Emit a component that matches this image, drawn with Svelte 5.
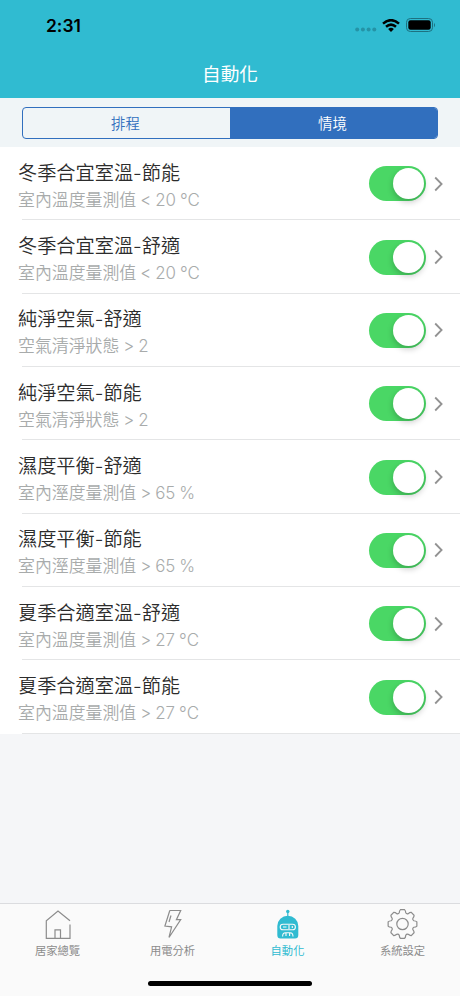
<script lang="ts">
	type Rule = { name: string; condition: string; enabled: boolean }

	let segment: string = '情境'
	let activeTab: string = 'auto'

	const segments = ['排程', '情境']

	let rules: Rule[] = [
		{ name: '冬季合宜室溫-節能', condition: '室內溫度量測值 < 20 °C', enabled: true },
		{ name: '冬季合宜室溫-舒適', condition: '室內溫度量測值 < 20 °C', enabled: true },
		{ name: '純淨空氣-舒適', condition: '空氣清淨狀態 > 2', enabled: true },
		{ name: '純淨空氣-節能', condition: '空氣清淨狀態 > 2', enabled: true },
		{ name: '濕度平衡-舒適', condition: '室內溼度量測值 > 65 %', enabled: true },
		{ name: '濕度平衡-節能', condition: '室內溼度量測值 > 65 %', enabled: true },
		{ name: '夏季合適室溫-舒適', condition: '室內溫度量測值 > 27 °C', enabled: true },
		{ name: '夏季合適室溫-節能', condition: '室內溫度量測值 > 27 °C', enabled: true }
	]

	const tabs = [
		{ id: 'home', label: '居家總覽' },
		{ id: 'power', label: '用電分析' },
		{ id: 'auto', label: '自動化' },
		{ id: 'settings', label: '系統設定' }
	]

	// eight rounded teeth, [radius, angle offset] for each tooth
	const tooth = [
		[11.8, -16],
		[13.8, -13],
		[13.8, 13],
		[11.8, 16]
	]

	function point(radius: number, degrees: number) {
		const a = (degrees * Math.PI) / 180
		return `${(15.5 + radius * Math.sin(a)).toFixed(2)} ${(16 - radius * Math.cos(a)).toFixed(2)}`
	}

	const gear =
		Array.from({ length: 8 }, (_, i) => {
			const p = tooth.map(([r, a]) => point(r, i * 45 + a))
			const corner = [point(14.5, i * 45 - 8), point(14.5, i * 45 + 8)]
			const valley = point(10.6, i * 45 + 22.5)
			const next = point(tooth[0][0], (i + 1) * 45 + tooth[0][1])
			return `${i ? '' : 'M' + p[0]}Q${p[1]} ${corner[0]}L${corner[1]}Q${p[2]} ${p[3]}Q${valley} ${next}`
		}).join('') + 'Z'
</script>

<div class="screen">
	<header>
		<div class="status">
			<span class="time">2:31</span>
			<div class="indicators">
				<svg class="signal" viewBox="0 0 22 5">
					<circle cx="2.2" cy="2.5" r="2" />
					<circle cx="7.9" cy="2.5" r="2" />
					<circle cx="13.6" cy="2.5" r="2" />
					<circle cx="19.3" cy="2.5" r="2" />
				</svg>
				<svg class="wifi" viewBox="0 0 18 13">
					<path d="M1 4.6Q9 -2.3 17 4.6" />
					<path d="M4 7.8Q9 3.5 14 7.8" />
					<path class="dot" d="M6.1 10Q9 7.6 11.9 10L9 13Z" />
				</svg>
				<svg class="battery" viewBox="0 0 30 14">
					<rect class="shell" x=".5" y=".5" width="26" height="13" rx="3.8" />
					<rect x="2.3" y="2.3" width="22.4" height="9.4" rx="2.2" />
					<path class="cap" d="M28 4.7Q30 7 28 9.3Z" />
				</svg>
			</div>
		</div>
		<h1>自動化</h1>
	</header>

	<div class="filter">
		<div class="segments">
			{#each segments as s}
				<button class:active={segment === s} on:click={() => (segment = s)}>{s}</button>
			{/each}
		</div>
	</div>

	<main>
		<ul>
			{#each rules as rule}
				<li>
					<div class="text">
						<h2>{rule.name}</h2>
						<p>{rule.condition}</p>
					</div>
					<button
						class="switch"
						class:on={rule.enabled}
						role="switch"
						aria-checked={rule.enabled}
						aria-label={rule.name}
						on:click={() => (rule.enabled = !rule.enabled)}
					>
						<span class="knob"></span>
					</button>
					<svg class="chevron" viewBox="0 0 9 16">
						<path d="M1.2 1.5L7.6 8L1.2 14.5" />
					</svg>
				</li>
			{/each}
		</ul>
	</main>

	<nav>
		<div class="tabs">
			{#each tabs as tab}
				<button class:active={activeTab === tab.id} on:click={() => (activeTab = tab.id)}>
					<svg viewBox="0 0 32 32">
						{#if tab.id === 'home'}
							<path d="M28 12.8L16 3L4.3 12.8V30.3H28V16.5" />
							<path d="M13 30V21.8H18.5V30" />
						{:else if tab.id === 'power'}
							<path d="M12.8 2.5H23.7L19.4 11.7H23.7L12 29.5L14.6 18.8L7.9 18L12.8 2.5" />
							<path d="M14 7.5L12 14" />
						{:else if tab.id === 'auto'}
							<circle class="solid" cx="15.8" cy="3.5" r="1.7" />
							<path d="M15.8 4V10" />
							<path class="solid" d="M5.3 18A10.5 10.2 0 0 1 26.3 18V27Q26.3 30.5 23 30.5H8.6Q5.3 30.5 5.3 27Z" />
							<rect class="face" x="8.2" y="16.2" width="15.2" height="5.6" rx="2.8" />
							<path class="face" d="M11 19H14.5M17 17V21M20.3 18V20" />
							<path class="face" d="M10.6 28.4Q10.6 24.7 13.5 24.7H18.1Q21 24.7 21 28.4M14 25V28M17.6 25V28" />
						{:else}
							<path d={gear} />
							<circle cx="15.5" cy="16" r="5.7" />
						{/if}
					</svg>
					<span>{tab.label}</span>
				</button>
			{/each}
		</div>
		<div class="indicator"></div>
	</nav>
</div>

<style>
	:global(body) {
		margin: 0;
	}

	.screen {
		display: flex;
		flex-direction: column;
		width: 460px;
		height: 996px;
		overflow: hidden;
		background: #f5f6f8;
		font-family: Inter, 'Noto Sans CJK TC', sans-serif;
		font-feature-settings: 'calt' 0;
	}

	button {
		margin: 0;
		padding: 0;
		border: none;
		background: none;
		font-family: inherit;
		cursor: pointer;
	}

	svg {
		display: block;
		fill: none;
	}

	header {
		height: 98px;
		flex: none;
		background: #30bbd1;
	}

	.status {
		display: flex;
		align-items: center;
		justify-content: space-between;
		height: 50px;
		padding: 0 24px 0 46px;
	}

	.time {
		font-size: 17.4px;
		font-weight: 600;
	}

	.indicators {
		display: flex;
		align-items: center;
	}

	.signal {
		width: 22px;
		height: 5px;
		margin: 9px 5px 0 0;
		fill: #2493a6;
	}

	.wifi {
		width: 18px;
		height: 13px;
		margin-right: 6px;
		stroke: #000;
		stroke-width: 2.5;
	}

	.wifi .dot {
		fill: #000;
		stroke: none;
	}

	.battery {
		width: 30px;
		height: 14px;
		fill: #000;
	}

	.battery .shell {
		fill: none;
		stroke: #1d7180;
	}

	.battery .cap {
		fill: #1d7180;
	}

	h1 {
		margin: 0;
		color: #fff;
		font-size: 18.7px;
		font-weight: 400;
		line-height: 49px;
		text-align: center;
	}

	.filter {
		flex: none;
		box-sizing: border-box;
		height: 49px;
		padding: 9px 22px 0;
		background: #f0f5f7;
	}

	.segments {
		display: grid;
		grid-template-columns: 1fr 1fr;
		box-sizing: border-box;
		height: 32px;
		border: 1px solid #316fbe;
		border-radius: 4px;
		overflow: hidden;
	}

	.segments button {
		padding: 0 2px 1px 0;
		color: #316fbe;
		font-size: 14.4px;
		font-weight: 350;
	}

	.segments button.active {
		background: #316fbe;
		color: #fff;
	}

	main {
		flex: 1;
	}

	ul {
		margin: 0;
		padding: 0;
		list-style: none;
		background: #fff;
	}

	li {
		display: flex;
		align-items: center;
		height: 73.35px;
		padding: 0 17px 0 18px;
		background: linear-gradient(#e4e5e6, #e4e5e6) 22px 100% / 100% 1px no-repeat;
	}

	.text {
		flex: 1;
		padding-top: 4px;
	}

	h2 {
		margin: 0;
		color: #2c2c2c;
		font-size: 19.2px;
		font-weight: 350;
		line-height: 28px;
	}

	p {
		margin: 0;
		color: #a8abab;
		font-size: 16.9px;
		font-weight: 350;
		line-height: 26px;
		word-spacing: -0.8px;
	}

	.switch {
		display: flex;
		justify-content: flex-start;
		box-sizing: border-box;
		width: 57px;
		height: 35px;
		padding: 2px;
		border-radius: 18px;
		background: #e5e5ea;
	}

	.switch.on {
		justify-content: flex-end;
		background: #4ad765;
	}

	.knob {
		width: 31px;
		height: 31px;
		border-radius: 50%;
		background: #fff;
		box-shadow: 0 3px 6px rgba(0, 0, 0, 0.22);
	}

	.chevron {
		width: 9px;
		height: 16px;
		margin-left: 8.5px;
		stroke: #929292;
		stroke-width: 1.8;
	}

	nav {
		display: flex;
		flex-direction: column;
		justify-content: space-between;
		align-items: center;
		flex: none;
		box-sizing: border-box;
		height: 93px;
		padding-bottom: 10px;
		border-top: 1px solid #dbdcdf;
		background: #fafafa;
	}

	.tabs {
		display: grid;
		grid-template-columns: repeat(4, 1fr);
		width: 100%;
	}

	.tabs button {
		display: flex;
		flex-direction: column;
		align-items: center;
		padding-top: 4px;
		color: #8c8c8c;
		font-size: 11.3px;
		line-height: 22px;
	}

	.tabs button.active {
		color: #30bbd1;
	}

	.tabs svg {
		width: 32px;
		height: 32px;
		stroke: currentColor;
		stroke-width: 1.2;
	}

	.tabs .solid {
		fill: currentColor;
		stroke: none;
	}

	.tabs .face {
		stroke: #fafafa;
		stroke-width: 1.1;
	}

	.indicator {
		width: 164px;
		height: 5px;
		border-radius: 3px;
		background: #000;
	}
</style>
